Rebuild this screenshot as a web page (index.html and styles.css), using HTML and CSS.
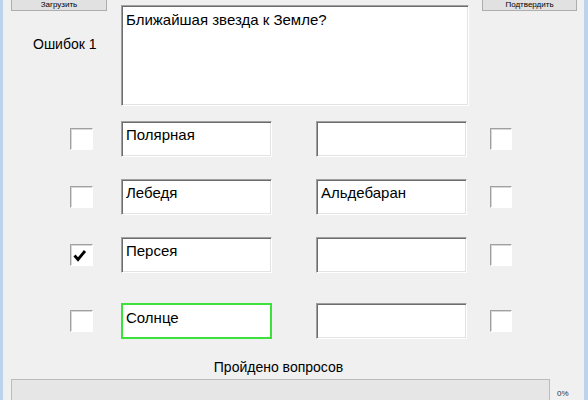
FILE: index.html
```html
<!DOCTYPE html>
<html lang="ru">
<head>
<meta charset="utf-8">
<link rel="stylesheet" href="styles.css">
</head>
<body>
<div class="window">
  <div class="top">
    <div class="side-left">
      <button class="btn btn-load">Загрузить</button>
      <div class="errors">Ошибок 1</div>
    </div>
    <div class="question field">Ближайшая звезда к Земле?</div>
    <div class="side-right">
      <button class="btn btn-confirm">Подтвердить</button>
    </div>
  </div>
  <div class="answers">
    <div class="row">
      <div class="check"></div>
      <div class="field answer">Полярная</div>
      <div class="field answer answer-right"></div>
      <div class="check check-right"></div>
    </div>
    <div class="row">
      <div class="check"></div>
      <div class="field answer">Лебедя</div>
      <div class="field answer answer-right">Альдебаран</div>
      <div class="check check-right"></div>
    </div>
    <div class="row">
      <div class="check"><svg width="23" height="22" viewBox="0 0 23 22"><path d="M4.5 11.5 L8 15.5 L15 7" fill="none" stroke="#000" stroke-width="2.8"/></svg></div>
      <div class="field answer">Персея</div>
      <div class="field answer answer-right"></div>
      <div class="check check-right"></div>
    </div>
    <div class="row row-last">
      <div class="check"></div>
      <div class="field answer answer-correct">Солнце</div>
      <div class="field answer answer-right"></div>
      <div class="check check-right"></div>
    </div>
  </div>
  <div class="footer">
    <div class="progress-label">Пройдено вопросов</div>
    <div class="progress-row">
      <div class="progress-bar"></div>
      <div class="progress-pct">0%</div>
    </div>
  </div>
</div>
</body>
</html>
```

FILE: styles.css
```css
html, body {
  margin: 0;
  padding: 0;
  background: #f0f0f0;
}
.window {
  box-sizing: border-box;
  width: 588px;
  height: 400px;
  overflow: hidden;
  background: #f0f0f0;
  border-left: 3px solid #bcd3ec;
  border-right: 4px solid #bcd3ec;
  font-family: "Liberation Sans", Arial, sans-serif;
  color: #000;
}
.top {
  display: flex;
  align-items: flex-start;
  margin-top: -12px;
}
.side-left {
  width: 118px;
  flex: none;
}
.btn {
  display: block;
  box-sizing: border-box;
  height: 23px;
  padding: 10px 0 0;
  border: 1px solid #adadad;
  background: #e1e1e1;
  font-family: "Liberation Sans", Arial, sans-serif;
  font-size: 8px;
  line-height: 9px;
  color: #000;
  text-align: center;
}
.btn-load {
  margin-left: 8px;
  width: 96px;
}
.errors {
  margin-top: 25px;
  padding-left: 30px;
  font-size: 14px;
  line-height: 16px;
}
.field {
  box-sizing: border-box;
  background: #fff;
  border-top: 1px solid #a0a0a0;
  border-left: 1px solid #a0a0a0;
  border-right: 1px solid #fff;
  border-bottom: 1px solid #fff;
  box-shadow: inset 1px 1px 0 #6d6d6d, inset -1px -1px 0 #e3e3e3;
  font-size: 15px;
  line-height: 17px;
}
.question {
  flex: none;
  width: 348px;
  height: 101px;
  margin-top: 17px;
  padding: 5px 4px;
}
.side-right {
  flex: none;
}
.btn-confirm {
  margin-left: 13px;
  width: 95px;
}
.answers {
  display: flex;
  flex-direction: column;
  gap: 22px;
  margin-top: 15px;
}
.row {
  display: flex;
  align-items: center;
  height: 36px;
  padding-left: 67px;
}
.row-last {
  margin-top: 8px;
}
.check {
  box-sizing: border-box;
  flex: none;
  width: 23px;
  height: 22px;
  background: #fff;
  border-top: 1px solid #a0a0a0;
  border-left: 1px solid #a0a0a0;
  border-right: 1px solid #fff;
  border-bottom: 1px solid #fff;
  box-shadow: inset 1px 1px 0 #d8d8d8;
  position: relative;
}
.check svg {
  position: absolute;
  left: -1px;
  top: -1px;
}
.check-right {
  width: 22px;
  margin-left: 23px;
}
.answer {
  flex: none;
  width: 151px;
  height: 36px;
  margin-left: 28px;
  padding: 4px 4px;
}
.answer-right {
  margin-left: 44px;
}
.answer-correct {
  border: 2px solid #3be23b;
  box-shadow: none;
  padding: 4px 3px;
}
.footer {
  padding-left: 8px;
  margin-top: 20px;
}
.progress-label {
  width: 535px;
  text-align: center;
  font-size: 14px;
  line-height: 16px;
}
.progress-row {
  display: flex;
  align-items: flex-start;
  margin-top: 4px;
}
.progress-bar {
  box-sizing: border-box;
  flex: none;
  width: 539px;
  height: 24px;
  border: 1px solid #bcbcbc;
  background: #e6e6e6;
}
.progress-pct {
  margin-left: 7px;
  margin-top: 10px;
  font-size: 8px;
  line-height: 9px;
  color: #333;
}
```
